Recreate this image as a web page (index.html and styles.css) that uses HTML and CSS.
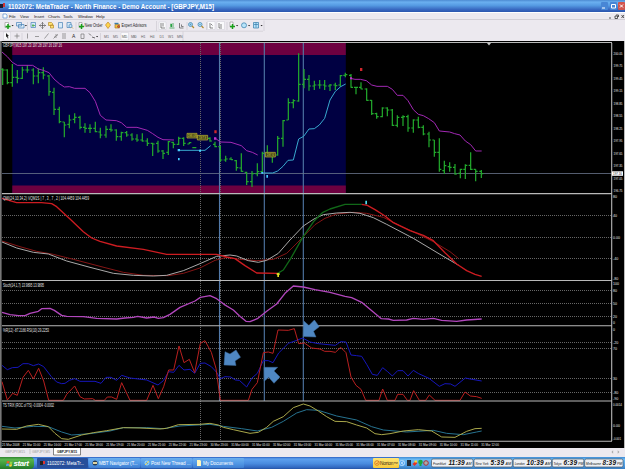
FILE: index.html
```html
<!DOCTYPE html>
<html lang="en">
<head>
    <meta charset="UTF-8">
    <meta name="viewport" content="width=device-width, initial-scale=1.0">
    <title>1102072: MetaTrader</title>

    <link rel="stylesheet" href="styles.css">
</head>
<body>
    <div class="titlebar">
        <svg class="app-icon" viewBox="0 0 6 6"><path fill="#1c1c30" d="M0 1h3v4H0z"/><path fill="#c33" d="M3 0h2v4H3z"/></svg>
        <svg class="title" viewBox="0 0 320 12"><text x="0" y="8.600" textLength="206" lengthAdjust="spacingAndGlyphs">1102072: MetaTrader - North Finance - Demo Account - [GBPJPY,M15]</text></svg>
        <div class="winbtns">
            <svg viewBox="0 0 7 7"><path fill="#fff" d="M1 5h3v1H1z"/></svg>
            <svg viewBox="0 0 7 7"><path fill="none" stroke="#fff" d="M1.5 2h4v3.5h-4z"/></svg>
            <svg class="close" viewBox="0 0 7 7"><path stroke="#fff" d="M2 2l3 3M5 2L2 5"/></svg>
        </div>
    </div>
    <div class="menubar">
        <svg class="doc-icon" viewBox="0 0 6 6"><path fill="#fff" stroke="#5b8fd0" stroke-width=".7" d="M1 1h3l1 1v3H1z"/></svg>
        <span>File</span><span class="view">View</span><span class="insert">Insert</span><span class="charts">Charts</span><span class="charts">Tools</span><span class="windows">Window</span><span>Help</span>
        <svg class="mdi" viewBox="0 0 17 7"><path fill="none" stroke="#333" stroke-width=".8" d="M1 5h2M7 3h2.5v2.500H7zM8 2h2.500v2M13.500 2l2.500 3M16 2l-2.500 3"/></svg>
    </div>
    <svg class="tools" viewBox="0 20 625 21">
        <path stroke="#c9c6cd" stroke-width=".6" d="M0 31.200h263M264 20.500v10.500M183 31.500v9.500M27.500 22v8M76 22v8M156.500 21v10M187 22v8M206.500 22v8M227 22v8M22 33v7M100.500 33v7"/>
        <path fill="#fafafc" stroke="#c5c5cf" stroke-width=".4" d="M159 22h7v7.500h-7zM207.500 21.500h7.500v8h-7.500zM217 21.500h7.500v8H217zM3.500 32h7v8h-7zM121 32.500h7.500v7.500H121z"/>
        <g fill="none" stroke-width=".7">
            <path fill="#fff" stroke="#999" d="M5 22.500h3.500v5H5zM79 22.500h3v5h-3zM230 22h3v5h-3z"/>
            <path stroke="#18a018" stroke-width="1.500" d="M8 24v5M5.500 26.500h5M81.500 24v5M79 26.500h5M232.500 24v5M230 26.500h5"/>
            <path fill="#d8eaf8" stroke="#4b84b8" d="M16.500 22.500h5v3.500h-5zM18.500 24.500H24V28h-5.500zM31 22.500h4.500v5H31zM58.500 22.500h4v5.500h-4zM67 22.500h4v5h-4z"/>
            <path stroke="#36a336" d="M33 24v3M32 25.500h3"/>
            <path stroke="#555" d="M42.500 22.500v6M39.500 25.500h6M41.500 23.500l1-1 1 1M41.500 27.500l1 1 1-1M40.500 24.500l-1 1 1 1M44.500 24.500l1 1-1 1"/>
            <path fill="#ffe173" stroke="#b78c28" d="M48.500 22.500h3l1 1v2h-4zM50.500 25h3v3h-3z"/>
            <circle fill="#c8e6fa" stroke="#4585b8" cx="70.500" cy="26" r="1.600"/><path stroke="#b28b30" d="M71.500 27l1.500 1.500"/>
            <path fill="#ffd54e" stroke="#bf882e" d="M108 22l2.500 3-2.500 3.500-2.500-3.500z"/>
            <path fill="#f3c33d" stroke="#aa7e30" d="M115 24.500h4.500V28H115z"/><circle fill="#d85244" stroke="#942" cx="118.500" cy="26.500" r="1"/><path stroke="#397dab" stroke-width="1.400" d="M114.500 23.500h4"/>
            <path stroke="#555" d="M161 23v5h4M163 23v3.500M179.500 23v5h4M181.500 24.500v2h2M210 23v5h3M211 24l1.500 1.500M219 23v5h3M221 24v3"/>
            <path stroke="#22963a" d="M169.500 28h5M171 23.500v3M173 23v4"/><path fill="#27a342" d="M170.500 24h1.500v3h-1.500z"/>
            <g fill="#b9e4fa" stroke="#347caa"><circle cx="190.500" cy="24.500" r="2"/><circle cx="200" cy="24.500" r="2"/><circle cx="244" cy="25.300" r="2.500"/><path d="M253.500 22.500h5v5.500h-5zM254 24.500h4M256 22.500v5"/></g>
            <path stroke="#b28b30" stroke-width="1.200" d="M192 26l2 2M201.500 26l2 2"/>
            <path stroke="#347caa" stroke-width=".5" d="M189.500 24.500h2M190.500 23.500v2M199 24.500h2"/>
            <path stroke="#777" stroke-width=".7" d="M17 33.500v5M14.500 36h5M27.500 33.500v5M35 36.500h4M44.500 38.500l4-5M53.500 38.500l4-4M55 35h3M54 37h3M62 34h4M62 36h4M62 38h4M81 34h3v4.500h-3z"/>
            <path stroke="#333" d="M89 33.500l2 2M92 37l3 1"/>
        </g>
        <path fill="#222" d="M6 33l3 3-1.300.2.8 2-.8.3-.8-2-.9.800zM11.500 25h2.200l-1.100 1.200zM24.800 25H27l-1.100 1.200zM236 25h2.200l-1.100 1.200zM248 25h2.200l-1.100 1.200zM260.500 25h2.200l-1.100 1.200zM96 36h2.200l-1.100 1.200z"/>
        <g class="tooltext">
            <text x="84.500" y="27.300" textLength="18" lengthAdjust="spacingAndGlyphs">New Order</text>
            <text x="121.500" y="27.300" textLength="25" lengthAdjust="spacingAndGlyphs">Expert Advisors</text>
            <text x="72" y="38">A</text>
            <g class="periods"><text x="104" y="37.800">M1</text><text x="113" y="37.800">M5</text><text x="121.800" y="37.800" textLength="5.500">M15</text><text x="131" y="37.800" textLength="5.500">M30</text><text x="141" y="37.800">H1</text><text x="150" y="37.800">H4</text><text x="159.500" y="37.800">D1</text><text x="168" y="37.800">W1</text><text x="177" y="37.800">MN</text></g>
        </g>
    </svg>
    <svg class="chart" viewBox="0 41 625 407">
        <rect y="41" width="625" height="407"/>
        <rect class="edge" y="41" width="1.600" height="407"/>
        <rect fill="#000042" x="12.300" y="43" width="333.500" height="150"/>
        <path fill="#6d0040" d="M12.300 43h333.500v12H12.300zM12.300 185.500h333.500v7.500H12.300z"/>

        <!-- levels -->
        <path class="level" d="M2 215.500h610M2 237.500h610M2 258.500h610M2 290.500h610M2 303.500h610M2 316.500h610M2 342.500h610M2 348.500h610M2 378.500h610M2 392.500h610"/>
        <path class="level" d="M200.500 43v398M220.500 43v398"/>
        <path stroke="#5279a8" d="M219.500 43v358M264.300 43v358M303.300 43v358" stroke-width="1.100"/>
        <path stroke="#69758c" stroke-width=".8" d="M2 173.500h610"/>

        <!-- price -->
        <g class="lines" transform="translate(0 40) scale(.33333)">
            <path id="bars" class="bars"/>
            <g stroke="#a328b5">
                <polyline points="6,36 22,50 37,67 52,76 98,76 115,87 130,91 147,98 162,117 178,131 193,141 208,140 224,145 255,145 270,158 286,184 301,226 318,240 349,242 364,248 380,262 411,262 442,271 458,281 474,292 489,299 522,300"/>
                <polyline points="645,294 661,306 693,307 724,317 740,332 757,337 773,345"/>
                <polyline points="1050,115 1065,118 1081,118 1099,122 1115,135 1131,139 1162,139 1177,148 1192,166 1209,166 1224,182 1240,209 1255,223 1270,227 1286,236 1303,248 1318,273 1349,276 1364,281 1380,285 1396,303 1412,314 1427,333 1445,333"/>
            </g>
            <g stroke="#38a9ce">
                <polyline points="536,331 615,331 632,317"/>
                <polyline points="785,399 818,399 833,393 849,379 864,361 880,360 896,297 911,289 927,267 943,266 958,255 974,235 990,180 1006,154 1022,140 1037,132"/>
            </g>
            <g fill="#46caff"><path d="M533 327h7v7h-7zM534 354h5v7h-5zM597 329h6v6h-6zM784 396h5v5h-5zM799 405h5v8h-5z"/></g>
            <path fill="#d0262c" d="M643 271h7v9h-7zM1080 84h7v9h-7z"/>
            <path fill="#c030d0" d="M642 292h7v7h-7zM1050 112h6v6h-6z"/>
            <path stroke="#c8c032" fill="#45451c" stroke-width="2" d="M561 280h30v14h-30zM592 286h31v14h-31zM796 337h30v14h-30z"/>
            <text class="tag" x="563" y="291">198.09</text><text class="tag" x="597" y="297">197.9</text><text class="tag" x="800" y="348">197.6</text>
        </g>

        <!-- QMI -->
        <g class="lines" transform="translate(0 190) scale(.33333)">
            <polyline stroke="#861515" points="6,153 60,170 110,184 160,193 220,208 300,229 370,247 430,256 505,257 550,250 600,234 645,211 680,202 720,208 770,212 820,208 860,190 900,150 945,104 975,85 1010,72 1060,67 1100,70 1150,82 1200,107 1250,130 1300,155 1350,185 1375,205"/>
            <polyline stroke="#aaa9a9" points="6,156 50,174 100,187 145,192 200,213 270,232 340,250 400,256 460,258 500,256 550,242 600,221 650,199 690,195 710,198 745,212 775,217 800,211 835,190 870,150 910,108 942,87 970,74 1010,69 1050,67 1080,70 1120,83 1160,103 1240,145 1320,193 1376,226"/>
            <polyline class="thick" stroke="#cd1c21" points="6,25 50,38 125,38 155,41 170,50 210,87 250,125 275,144 300,154 350,168 430,178 500,193 650,193 680,201 705,206 735,227 770,249 835,250"/>
            <polyline class="thick" stroke="#116818" points="833,250 850,240 872,206 908,142 943,92 967,68 990,57 1035,43 1085,43"/>
            <polyline class="thick" stroke="#cd1c21" points="1085,43 1102,46 1125,59 1155,78 1180,98 1230,122 1270,136 1300,152 1335,188 1370,222 1400,242 1425,253 1445,259"/>
            <path fill="#e0df24" d="M832 249h5v12h-5zM830 250h9v5h-9z"/><path fill="#4edcef" d="M1096 32h5v11h-5z"/>
        </g>

        <!-- stochastic -->
        <g class="lines" transform="translate(0 190) scale(.33333)">
            <polyline class="thick" stroke="#b247bd" points="6,367 30,374 55,377 75,377 90,370 115,364 125,356 150,355 163,361 185,376 200,379 250,380 290,385 350,387 375,384 400,382 413,379 440,384 462,381 475,385 490,383 510,373 540,352 585,333 601,322 630,317 650,326 672,343 700,360 718,377 738,394 750,395 772,386 801,363 830,342 855,310 880,288 910,291 945,299 990,307 1035,319 1055,323 1085,337 1110,358 1144,386 1165,387 1180,391 1220,390 1240,385 1270,388 1300,385 1325,391 1370,394 1400,390 1445,387"/>
        </g>

        <!-- %R and RSI -->
        <g class="lines" transform="translate(0 320) scale(.33333)">
            <polyline stroke="#1616bc" points="6,136 22,149 37,143 54,142 69,131 85,131 100,137 116,132 131,140 154,170 170,186 185,191 195,190 208,181 224,176 240,184 285,184 303,190 318,172 333,172 350,181 365,166 390,174 440,180 474,195 490,182 506,155 521,157 537,136 552,150 570,148 584,160 601,130 615,129 634,140 650,157 661,176 675,170 692,171 706,180 718,181 740,201 756,174 772,160 790,122 805,122 819,128 836,99 865,70 885,63 908,54 930,66 955,71 1006,76 1022,65 1038,66 1053,105 1070,107 1085,109 1100,133 1117,163 1132,166 1148,143 1163,155 1177,168 1193,152 1209,152 1224,168 1240,151 1256,161 1287,175 1318,199 1335,191 1352,192 1365,199 1396,174 1410,177 1445,183"/>
            <polyline stroke="#ba2020" points="6,185 22,240 38,220 52,226 69,172 85,151 100,177 116,145 131,183 146,241 190,241 200,223 224,198 240,230 253,237 278,236 286,241 313,241 322,231 335,231 350,238 365,188 390,241 440,241 459,196 475,236 491,200 506,150 521,150 537,78 552,128 568,118 584,158 601,70 615,62 634,97 648,145 661,241 745,241 756,208 772,188 790,98 805,96 819,100 834,30 865,31 883,26 896,71 913,69 935,84 960,87 974,94 990,94 1006,97 1022,82 1038,98 1053,171 1068,196 1083,208 1097,241 1137,241 1148,207 1162,241 1185,241 1193,223 1209,223 1222,241 1230,241 1241,212 1258,241 1277,241 1288,225 1305,241 1380,241 1395,216 1411,228 1430,230 1445,235"/>
        </g>

        <!-- TRIX -->
        <g class="lines" transform="translate(0 320) scale(.33333)">
            <polyline stroke="#277391" points="6,319 45,324 100,319 145,320 185,336 215,345 270,341 330,333 370,323 440,323 490,326 540,318 630,313 670,319 725,326 772,333 815,322 850,304 890,279 920,269 955,271 1010,288 1070,300 1115,320 1150,330 1220,336 1300,331 1340,340 1390,344 1430,336 1445,333"/>
            <polyline stroke="#aaa84a" points="6,327 50,328 80,318 115,313 145,320 165,340 185,356 205,358 245,345 280,338 320,332 370,323 420,324 480,327 500,325 535,314 600,313 630,310 655,315 670,322 700,329 750,340 775,337 800,322 820,304 850,290 880,263 910,252 930,258 955,273 980,290 1005,304 1040,305 1070,315 1100,324 1125,341 1145,344 1170,341 1210,333 1255,329 1295,333 1325,351 1365,352 1400,334 1425,326 1445,325"/>
        </g>

        <path stroke="#b9b9b9" stroke-width="1.100" d="M2 42.500h610M2 193.600h610M2 280.500h610M2 325.700h610M2 401h610M2 441.200h610M611.700 43v398"/>
        <path fill="#ccc" d="M487 43h4l-2 2.500z"/>

        <g fill="#4f87c2" stroke="#3d6d9f" stroke-width=".5">
            <path d="M224 365l1-13.300 5 2.300 6-4 4.500 7.300-5.500 3.700 1 4.500z"/>
            <path d="M264 367.300h13.700l-3.700 3.700 6 6-6 6.300-5.300-6-4.500 4z"/>
            <path d="M303.200 336.500l.7-15.500 5 4.500 5.500-5.500 4.900 6.700-5.800 4.500 2.500 5.800z"/>
        </g>

        <g class="labels">
            <text x="3" y="47" textLength="59" lengthAdjust="spacingAndGlyphs">GBPJPY,M15  197.23 197.28 197.16 197.16</text>
            <text x="3" y="199.500" textLength="86" lengthAdjust="spacingAndGlyphs">QMI(24,10,34,2) VQM1S | 7 , 3 , 7 , 2 | 104.4459 104.4459</text>
            <text x="3" y="286.800" textLength="41" lengthAdjust="spacingAndGlyphs">Stoch(14,1,7) 13.9895 13.9895</text>
            <text x="3" y="331.800" textLength="46" lengthAdjust="spacingAndGlyphs">%R(12) -87.2166  RSI(10) 29.2253</text>
            <text x="3" y="407.200" textLength="51" lengthAdjust="spacingAndGlyphs">TS TRIX (ROC of TS) -0.0004 -0.0002</text>
            <g class="scale">
                <text x="613" y="198">80</text><text x="613" y="217">40</text><text x="613" y="239">0.00</text><text x="613" y="260">-40</text><text x="613" y="279.500">-80</text>
                <text x="613" y="285.300">100</text><text x="613" y="292">80</text><text x="613" y="305">50</text><text x="613" y="318">20</text><text x="613" y="324">0</text>
                <text x="613" y="330.500">0</text><text x="613" y="344">-20</text><text x="613" y="350">70</text><text x="613" y="380">30</text><text x="613" y="393.500">-80</text><text x="613" y="400">-90</text>
                <text x="613" y="406" textLength="9" lengthAdjust="spacingAndGlyphs">0.0014</text><text x="613" y="427">0.00</text><text x="613" y="440" textLength="8" lengthAdjust="spacingAndGlyphs">-0.001</text>
                <g id="prices"></g>
                <rect fill="#fff" x="612" y="171.300" width="11" height="4.500"/>
                <text class="now" x="613" y="175" textLength="9" lengthAdjust="spacingAndGlyphs">197.16</text>
            </g>
        </g>
        <g id="times" class="labels times"></g>
        <rect fill="#bbb" x="624" y="41" width="1" height="407"/>
    </svg>
    <div class="tabs">
        <svg viewBox="0 0 90 9">
            <path fill="#fff" stroke="#555" stroke-width=".7" d="M53.500-1h27v8h-27z"/>
            <path stroke="#bbb" stroke-width=".7" d="M30 1v5"/>
            <text x="5" y="5.300" textLength="20" lengthAdjust="spacingAndGlyphs">GBPJPY,M15</text><text x="32" y="5.300" textLength="18" lengthAdjust="spacingAndGlyphs">GBPJPY,M5</text><text class="active" x="57" y="5.300" textLength="20" lengthAdjust="spacingAndGlyphs">GBPJPY,M15</text>
        </svg>
        <svg class="tabnav" viewBox="0 0 9 7"><path fill="#aaa" d="M2 2v3L.5 3.500zM6 2v3l1.500-1.500z"/></svg>
    </div>
    <div class="taskbar">
        <div class="start">
            <svg viewBox="0 0 8 8"><path fill="#ef5a25" d="M1 1.500q1.500-1 3 0L3.500 4Q2 3.200.5 4z"/><path fill="#8fd645" d="M4.500 1.700q1.500.8 3 0L7 4.200q-1.500.8-3 0z"/><path fill="#55a0f4" d="M.4 4.500q1.500-1 3 0L3 7Q1.500 6.200 0 7z"/><path fill="#fbd33a" d="M4 4.700q1.500.8 3 0L6.500 7.200q-1.500.8-3 0z"/></svg>
            <b>start</b>
        </div>
        <div class="task current"><svg viewBox="0 0 6 6"><path fill="#222" d="M0 1h3v4H0z"/><path fill="#d33" d="M3 1h2v3H3z"/></svg>1102072: MetaTr...</div>
        <div class="task"><svg viewBox="0 0 6 6"><circle cx="3" cy="3" r="2.500" fill="#293b4d"/><path fill="#ddd3a0" d="M1 2h4v2H1z"/></svg>MBT Navigator (T...</div>
        <div class="task"><svg viewBox="0 0 6 6"><circle cx="3" cy="3" r="2" fill="none" stroke="#9ee2fa"/><path stroke="#f0d558" d="M1 5l4-4"/></svg>Post New Thread ...</div>
        <div class="task"><svg viewBox="0 0 6 6"><path fill="#fff5bd" d="M1 0h3l1 1v5H1z"/></svg>My Documents</div>
        <div class="norton"><svg viewBox="0 0 6 6"><circle cx="3" cy="3" r="2.300" fill="#fbd25c" stroke="#d96e16" stroke-width=".8"/><path fill="none" stroke="#d96e16" stroke-width=".7" d="M2 3l1 1 2-3"/></svg>Norton&trade;</div>
        <div class="tray">
            <svg class="trayicons" viewBox="0 0 31 10"><circle cx="3" cy="5" r="2.700" fill="#58aaf3" stroke="#d4ecff" stroke-width=".6"/><path stroke="#fff" fill="none" d="M4 3.500L2.500 5 4 6.500"/><path fill="#222e3c" d="M8 2h4v6H8z"/><path fill="#e53225" d="M13.500 6l3-3 2 2-3 3z"/><path fill="#fadd32" d="M15.500 2.500h2.500v2h-2.500z"/><circle cx="21.500" cy="4" r="2.300" fill="#18a83d"/><path fill="#18a83d" d="M20.500 5h2v3h-2z"/><circle cx="27" cy="5" r="2.300" fill="#aaa" stroke="#a33"/></svg>
            <svg class="clocks" viewBox="431 0 194 12">
                <g class="clock"><rect x="431.500" y="2" width="41.500" height="8" rx="1.500"/><rect x="474" y="2" width="38.300" height="8" rx="1.500"/><rect x="513.200" y="2" width="38.300" height="8" rx="1.500"/><rect x="552.300" y="2" width="31.500" height="8" rx="1.500"/><rect x="584.700" y="2" width="38.300" height="8" rx="1.500"/></g>
                <text x="433" y="7.800" textLength="13" lengthAdjust="spacingAndGlyphs">Frankfurt</text><text class="time" x="448.500" y="8.300" textLength="16">11:39</text><text x="466" y="7.800" textLength="5.500" lengthAdjust="spacingAndGlyphs">AM</text>
                <text x="475.500" y="7.800" textLength="13" lengthAdjust="spacingAndGlyphs">New York</text><text class="time" x="490.500" y="8.300" textLength="13.500">5:39</text><text x="505.500" y="7.800" textLength="5.500" lengthAdjust="spacingAndGlyphs">AM</text>
                <text x="514.700" y="7.800" textLength="10" lengthAdjust="spacingAndGlyphs">London</text><text class="time" x="526.500" y="8.300" textLength="17">10:39</text><text x="545" y="7.800" textLength="5.500" lengthAdjust="spacingAndGlyphs">AM</text>
                <text x="553.500" y="7.800" textLength="8" lengthAdjust="spacingAndGlyphs">Tokyo</text><text class="time" x="563.500" y="8.300" textLength="13.500">6:39</text><text x="578.300" y="7.800" textLength="5" lengthAdjust="spacingAndGlyphs">PM</text>
                <text x="586" y="7.800" textLength="15" lengthAdjust="spacingAndGlyphs">Melbourne</text><text class="time" x="602.500" y="8.300" textLength="13.500">8:39</text><text x="617" y="7.800" textLength="5" lengthAdjust="spacingAndGlyphs">PM</text>
            </svg>
        </div>
    </div>
    <script src="chart.js"></script>
</body>
</html>
```

FILE: styles.css
```css
body{
    margin: 0;
    width: 625px;
    height: 469px;
    overflow: hidden;
    display: flex;
    flex-direction: column;
    background-color: #ece9ef;
    font-family: "Liberation Sans", Arial, sans-serif;
    font-size: 5px;
    white-space: nowrap;
}

svg{
    display: block;
    flex: none;
}

.titlebar{
    height: 12px;
    flex: none;
    display: flex;
    align-items: center;
    background: linear-gradient(#4d8bd2, #6bb0f0 18%, #569be3 45%, #3767bf 80%, #2a56ae);
    color: #fff;
}

.app-icon{
    width: 6px;
    height: 6px;
    margin-right: 2px;
}

.title{
    width: 320px;
    height: 12px;
    fill: #fff;
    font-size: 7.5px;
    font-weight: bold;
}

.winbtns{
    display: flex;
    gap: 1.5px;
    margin-left: auto;
}

.winbtns svg{
    width: 7px;
    height: 8px;
    background-color: #4886d5;
    border-radius: 1px;
}

.winbtns .close{
    background-color: #d2564e;
}

.menubar{
    height: 8px;
    flex: none;
    box-sizing: border-box;
    display: flex;
    align-items: center;
    border-top: 1px solid #fff;
    border-bottom: 1px solid #d2cfd6;
    color: #222;
    font-size: 4.3px;
    letter-spacing: -0.1px;
}

.menubar span{
    width: 11px;
}

.menubar .view{
    width: 14px;
}

.menubar .insert{
    width: 14px;
}

.menubar .charts{
    width: 15px;
}

.menubar .windows{
    width: 18px;
}

.doc-icon{
    width: 6px;
    height: 6px;
    margin: 0 1.5px;
}

.mdi{
    width: 17px;
    height: 7px;
    margin-left: auto;
}

.tools{
    width: 625px;
    height: 21px;
}

.tooltext{
    font-size: 4.9px;
    fill: #222;
}

.periods{
    font-size: 3.6px;
    fill: #666;
}

.chart{
    width: 625px;
    height: 407px;
}

.edge{
    fill: #777;
}

.level{
    stroke: #666;
    stroke-width: 1;
    stroke-dasharray: 1 1;
}

.lines{
    fill: none;
    stroke-width: 3;
    stroke-linejoin: round;
}

.thick{
    stroke-width: 4;
}

.bars{
    stroke: #22a92c;
    stroke-width: 3.7;
}

.tag{
    font-size: 8.5px;
    fill: #ddd83a;
}

.labels{
    font-size: 4.5px;
    fill: #e8e8e8;
}

.scale{
    font-size: 3.6px;
}

.times{
    font-size: 3.5px;
}

.labels .now{
    fill: #222;
}

.tabs{
    height: 9px;
    flex: none;
    display: flex;
    justify-content: space-between;
    font-size: 3.8px;
    fill: #999;
}

.tabs svg{
    width: 90px;
    height: 9px;
}

.tabs .active{
    fill: #222;
    font-weight: bold;
}

.tabs .tabnav{
    width: 12px;
    height: 8px;
    margin-right: 3px;
}

.taskbar{
    height: 12px;
    flex: none;
    display: flex;
    align-items: stretch;
    background: linear-gradient(#2b60c2, #5da0ee 16%, #498bdf 55%, #2e64bd 90%, #2451a1);
    color: #fff;
}

.start{
    width: 34px;
    margin-right: 3px;
    display: flex;
    align-items: center;
    justify-content: center;
    gap: 1px;
    border-radius: 0 4px 4px 0;
    background: linear-gradient(#2f8330, #58b34d 20%, #39973a 65%, #23762a);
    font-size: 8px;
    font-style: italic;
}

.start b{
    letter-spacing: -0.5px;
}

.start svg{
    width: 7px;
    height: 7px;
}

.task{
    width: 51px;
    box-sizing: border-box;
    margin: 1px 1px 1px 0;
    padding-left: 3px;
    display: flex;
    align-items: center;
    gap: 1px;
    border-radius: 1px;
    background: linear-gradient(#6bafed, #4f95e4 60%, #3e7ed1);
    font-size: 4.7px;
    letter-spacing: -0.1px;
}

.task svg{
    width: 6px;
    height: 6px;
}

.current{
    background: #274f9b;
}

.norton{
    width: 26px;
    box-sizing: border-box;
    margin: 1px 0 1px auto;
    display: flex;
    align-items: center;
    justify-content: center;
    border-radius: 1px;
    background: linear-gradient(#ffe778, #f6c83a);
    color: #352a16;
    font-size: 4.8px;
    letter-spacing: -0.2px;
}

.norton svg{
    width: 6px;
    height: 6px;
}

.tray{
    width: 226px;
    flex: none;
    display: flex;
    align-items: center;
    gap: 1px;
    background: linear-gradient(#3f8ad5, #6bbaf2 20%, #4f9ee6 70%, #377bbf);
}

.trayicons{
    width: 31px;
    height: 10px;
}

.clocks{
    width: 194px;
    height: 12px;
    font-size: 3.4px;
    font-style: italic;
    fill: #111;
}

.clock{
    fill: #eef0f4;
    stroke: #456;
    stroke-width: 0.7;
}

.time{
    font-size: 6.5px;
    font-weight: bold;
}
```

FILE: chart.js
```js
"use strict";

// x, high, low, open, close
var bars = [
    [8,85,135,88,90], [22,88,133,90,128], [37,72,140,128,112], [52,90,130,112,115],
    [67,80,117,115,90], [82,75,98,90,90], [100,85,133,90,108], [115,85,130,108,98],
    [130,82,118,98,105], [147,105,167,108,155], [162,143,225,157,208], [178,200,250,208,245],
    [193,246,292,246,255], [208,224,265,253,240], [224,220,250,238,232], [240,227,268,232,262],
    [255,250,278,262,265], [270,253,279,265,265], [286,245,277,265,275], [301,263,295,276,285],
    [318,257,293,285,268], [333,253,275,268,270], [349,268,302,270,290], [364,275,302,290,278],
    [380,273,290,278,285], [396,280,302,285,297], [411,283,305,297,300], [427,280,305,300,303],
    [442,295,318,303,310], [458,308,348,310,312], [474,302,338,310,333], [489,330,357,333,340],
    [505,303,345,337,305], [520,305,325,307,313], [536,290,315,313,295], [551,292,318,295,310],
    [568,307,312,312,308], [583,322,325,323,323], [600,285,300,292,295], [615,288,300,295,295],
    [630,292,305,295,303], [645,305,322,313,320], [661,318,365,320,360], [677,347,365,360,357],
    [693,352,360,357,359], [709,360,392,362,383], [724,340,395,384,394], [740,395,435,397,425],
    [756,393,441,425,401], [772,370,409,401,395], [787,335,400,395,340], [802,316,350,345,345],
    [817,338,368,345,345], [833,288,347,345,295], [849,240,320,295,242], [865,175,240,240,188],
    [880,178,205,188,182], [896,40,185,183,133], [912,87,145,133,118], [927,105,152,118,138],
    [943,122,150,138,135], [959,120,146,135,135], [974,120,150,135,138], [990,132,153,138,135],
    [1006,128,150,135,137], [1021,105,140,135,107], [1036,98,112,106,104], [1053,102,143,106,142],
    [1068,140,163,142,142], [1083,127,148,142,147], [1100,145,182,147,181], [1115,180,225,181,221],
    [1130,218,236,221,230], [1147,202,232,230,204], [1162,202,229,204,210], [1177,207,258,210,256],
    [1192,226,262,256,232], [1209,226,258,232,230], [1224,224,275,230,264], [1240,238,278,264,240],
    [1255,230,265,240,262], [1270,256,286,262,282], [1287,275,322,282,300], [1303,300,350,300,337],
    [1318,295,395,337,388], [1333,362,402,392,377], [1349,367,395,380,382], [1365,372,404,382,402],
    [1381,386,415,400,388], [1396,373,417,388,376], [1412,337,390,376,388], [1427,388,424,388,394],
    [1444,390,414,394,401]
];

var d = "";
bars.forEach(function (b) {
    d += "M" + b[0] + " " + b[1] + "V" + b[2];
    d += "M" + (b[0] - 6) + " " + b[3] + "h6M" + b[0] + " " + b[4] + "h6";
});
document.getElementById("bars").setAttribute("d", d);

function label(parent, x, y, str, width) {
    var t = document.createElementNS("http://www.w3.org/2000/svg", "text");
    t.setAttribute("x", x);
    t.setAttribute("y", y);
    t.setAttribute("textLength", width);
    t.setAttribute("lengthAdjust", "spacingAndGlyphs");
    t.textContent = str;
    document.getElementById(parent).appendChild(t);
}

for (var i = 0; i < 12; i++) {
    label("prices", 613.5, 54.7 + i * 12.5, (200.05 - i * 0.3).toFixed(2), 9);
}

var times = ["21 Mar 2008"];
for (var h = 15; h < 24; h++) {
    times.push("21 Mar " + h + ":00");
}
times.push("30 Mar 23:00");
for (h = 0; h <= 12; h++) {
    times.push("31 Mar " + (h < 10 ? "0" : "") + h + ":00");
}
times.forEach(function (str, n) {
    label("times", 2 + n * 20.84, 446.2, str, 17.5);
});
```
